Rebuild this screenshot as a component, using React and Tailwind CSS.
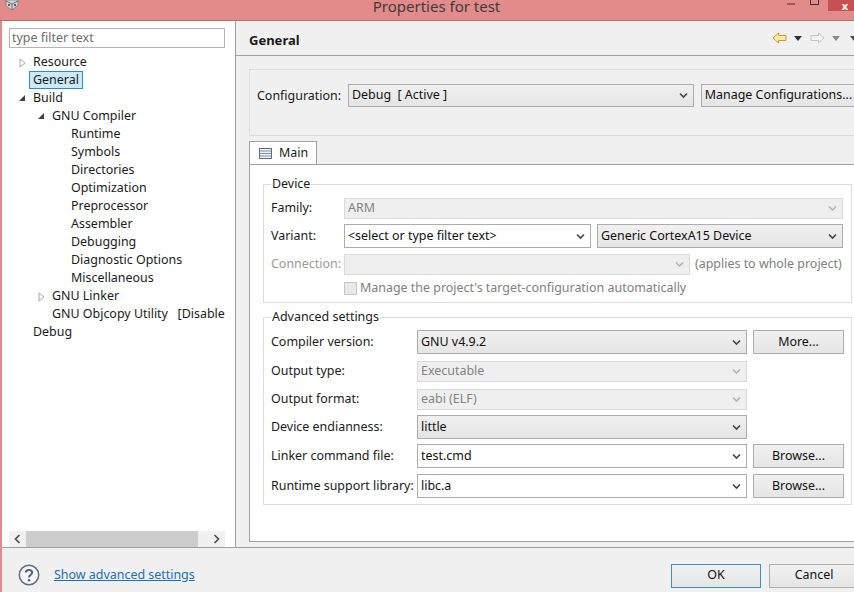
import React from "react";

const tree = [
  { label: "Resource", depth: 0, arrow: "closed" },
  { label: "General", depth: 0, selected: true },
  { label: "Build", depth: 0, arrow: "open" },
  { label: "GNU Compiler", depth: 1, arrow: "open" },
  { label: "Runtime", depth: 2 },
  { label: "Symbols", depth: 2 },
  { label: "Directories", depth: 2 },
  { label: "Optimization", depth: 2 },
  { label: "Preprocessor", depth: 2 },
  { label: "Assembler", depth: 2 },
  { label: "Debugging", depth: 2 },
  { label: "Diagnostic Options", depth: 2 },
  { label: "Miscellaneous", depth: 2 },
  { label: "GNU Linker", depth: 1, arrow: "closed" },
  { label: "GNU Objcopy Utility   [Disabled]", depth: 1 },
  { label: "Debug", depth: 0 },
];

const depthPad = ["pl-[31px]", "pl-[50px]", "pl-[69px]"];
const arrowPad = ["left-[16px]", "left-[35px]"];
const closedPad = ["left-[17px]", "left-[36px]"];

const Chevron = ({ muted }) => (
  <svg width="9" height="7" viewBox="0 0 9 7" className="shrink-0">
    <path d="M1 1.5 L4.5 5 L8 1.5" fill="none" stroke={muted ? "#b4b4b4" : "#444"} strokeWidth="1.6" />
  </svg>
);

const TreeRow = ({ item }) => (
  <div className={`relative flex h-[18px] items-center whitespace-pre ${depthPad[item.depth]}`}>
    {item.arrow === "closed" && (
      <svg width="7" height="10" viewBox="0 0 7 10" className={`absolute top-[5px] ${closedPad[item.depth]}`}>
        <path d="M1 1 L6 5 L1 9 Z" fill="#fff" stroke="#a6a6a6" />
      </svg>
    )}
    {item.arrow === "open" && (
      <svg width="8" height="8" viewBox="0 0 8 8" className={`absolute top-[5px] ${arrowPad[item.depth]}`}>
        <path d="M7 1 L7 7 L1 7 Z" fill="#404040" />
      </svg>
    )}
    <span className={item.selected ? "-ml-[4px] border border-[#2e8db3] bg-[#cde8f7] px-[3px] leading-[16px]" : ""}>
      {item.label}
    </span>
  </div>
);

// variant: gray (readonly combo), white (editable), off (disabled)
const Select = ({ value = "", variant = "gray", className = "" }) => {
  const styles = {
    gray: "border-[#acacac] bg-gradient-to-b from-[#f0f0f0] to-[#e5e5e5] text-[#111]",
    white: "border-[#acacac] bg-white text-[#111]",
    off: "border-[#d9d9d9] bg-[#efefef] text-[#838383]",
  };
  return (
    <div className={`flex items-center justify-between border pl-[3px] pr-[5px] ${styles[variant]} ${className}`}>
      <span className="whitespace-pre">{value}</span>
      <Chevron muted={variant === "off"} />
    </div>
  );
};

const Button = ({ children, className = "" }) => (
  <div className={`flex items-center justify-center border border-[#acacac] bg-gradient-to-b from-[#f0f0f0] to-[#e5e5e5] text-[#111] ${className}`}>
    {children}
  </div>
);

const Row = ({ label, children, className = "", labelClass = "" }) => (
  <div className={`flex items-center ${className}`}>
    <span className={`shrink-0 whitespace-nowrap ${labelClass}`}>{label}</span>
    {children}
  </div>
);

const App = () => {
  return (
    <div
      className="flex h-[592px] w-[854px] flex-col overflow-hidden bg-[#e38a8a] text-[12.45px] text-[#1a1a1a]"
      style={{ fontFamily: '"Noto Sans", sans-serif' }}
    >
      {/* Title bar */}
      <div className="flex h-[21px] shrink-0 items-start border-b border-[#b56f6f]">
        <svg width="24" height="11" viewBox="0 0 24 11" className="shrink-0">
          <path d="M6 0 L18 0 L18 5 L12 10 L6 6 Z" fill="#d6d6d6" stroke="#777" strokeWidth="0.7" />
          <path d="M12 4 L12 10 M6 1 L12 4 L18 1" fill="none" stroke="#555" strokeWidth="0.8" />
          <circle cx="9" cy="5" r="1" fill="#333" />
          <circle cx="15" cy="5" r="1" fill="#333" />
        </svg>
        <div className="-mt-[5px] flex-1 pl-[62px] text-center text-[15px] leading-[22px] text-[#3d3d3d]">
          Properties for test
        </div>
        <div className="flex w-[67px] shrink-0 items-start">
          <div className="mt-[3px] h-[2px] w-[8px] bg-[#a05a5a]" />
          <div className="ml-[15px] h-[5px] w-[9px] border-x border-b border-[#333]" />
          <div className="ml-[9px] flex h-[11px] flex-1 items-center justify-center bg-[#c75050] pl-[8px] text-[11px] font-bold leading-none text-white">
            x
          </div>
        </div>
      </div>

      {/* Body */}
      <div className="ml-[2px] flex min-h-0 flex-1 flex-col bg-[#f0f0f0]">
        <div className="flex min-h-0 flex-1">
          {/* Left tree */}
          <div className="flex w-[234px] shrink-0 flex-col border-r border-[#a0a0a0] bg-white pl-[7px]">
            <div className="mt-[7px] flex h-[20px] w-[216px] items-center border border-[#b4b4b4] pl-[2px] text-[#6d6d6d]">
              type filter text
            </div>
            <div className="mt-[5px] w-[216px] flex-1 overflow-hidden">
              <div className="-ml-[7px]">
                {tree.map((item) => (
                  <TreeRow key={item.label} item={item} />
                ))}
              </div>
            </div>
            <div className="flex h-[16px] w-[216px] items-center bg-[#f0f0f0]">
              <div className="flex w-[17px] justify-center">
                <svg width="7" height="10" viewBox="0 0 7 10">
                  <path d="M5.5 1 L1.5 5 L5.5 9" fill="none" stroke="#505050" strokeWidth="1.7" />
                </svg>
              </div>
              <div className="h-full w-[172px] bg-[#cdcdcd]" />
              <div className="flex flex-1 justify-end pr-[5px]">
                <svg width="7" height="10" viewBox="0 0 7 10">
                  <path d="M1.5 1 L5.5 5 L1.5 9" fill="none" stroke="#505050" strokeWidth="1.7" />
                </svg>
              </div>
            </div>
          </div>

          {/* Right pane */}
          <div className="flex min-w-0 flex-1 flex-col">
            <div className="flex h-[35px] shrink-0 items-center justify-between border-b border-[#a0a0a0] pl-[13px]">
              <span className="mt-[6px] text-[13px] font-bold">General</span>
              <div className="flex items-center">
                <svg width="15" height="12" viewBox="0 0 15 12">
                  <path d="M1 6 L6.5 1 L6.5 3.5 L14 3.5 L14 8.5 L6.5 8.5 L6.5 11 Z" fill="#ffe9a0" stroke="#d09a30" />
                </svg>
                <svg width="8" height="5" viewBox="0 0 8 5" className="ml-[7px]">
                  <path d="M0 0 L8 0 L4 5 Z" fill="#333" />
                </svg>
                <svg width="15" height="12" viewBox="0 0 15 12" className="ml-[8px]">
                  <path d="M14 6 L8.5 1 L8.5 3.5 L1 3.5 L1 8.5 L8.5 8.5 L8.5 11 Z" fill="#f2f2f2" stroke="#c4c4c4" />
                </svg>
                <svg width="8" height="5" viewBox="0 0 8 5" className="ml-[7px]">
                  <path d="M0 0 L8 0 L4 5 Z" fill="#8a8a8a" />
                </svg>
                <svg width="8" height="5" viewBox="0 0 8 5" className="-mr-[4px] ml-[10px]">
                  <path d="M0 0 L8 0 L4 5 Z" fill="#44446a" />
                </svg>
              </div>
            </div>

            <div className="flex min-h-0 flex-1 flex-col pl-[13px] pt-[13px]">
              {/* Configuration */}
              <div className="h-[67px] w-[620px] shrink-0 border border-[#dcdcdc] pl-[7px] pt-[14px]">
                <Row label="Configuration:" labelClass="mt-[1px] w-[91px]" className="h-[23px]">
                  <Select value="Debug  [ Active ]" className="h-full w-[346px]" />
                  <Button className="ml-[7px] h-full w-[155px] whitespace-nowrap">Manage Configurations...</Button>
                </Row>
              </div>

              {/* Tab */}
              <div className="mt-[5px] flex h-[24px] w-[68px] shrink-0 items-center border-x border-t border-[#a0a0a0] bg-white pl-[9px]">
                <svg width="13" height="11" viewBox="0 0 13 11">
                  <rect x="0.5" y="0.5" width="12" height="10" fill="#eef2f6" stroke="#56708c" />
                  <path d="M1 3 H12 M1 5.5 H12 M1 8 H12" stroke="#7d93aa" />
                </svg>
                <span className="ml-[7px]">Main</span>
              </div>

              {/* Tab body */}
              <div className="-mt-px min-h-0 flex-1 border-l border-t border-[#a0a0a0] bg-white pl-[13px] pt-[10px]">
                <fieldset className="h-[128px] w-[589px] border border-[#dcdcdc] pl-[7px]">
                  <legend className="px-[1px] leading-[18px]">Device</legend>
                  <Row label="Family:" labelClass="w-[73px]" className="mt-[5px] h-[21px]">
                    <Select value="ARM" variant="off" className="h-full w-[499px]" />
                  </Row>
                  <Row label="Variant:" labelClass="w-[73px]" className="mt-[5px] h-[24px]">
                    <Select value="<select or type filter text>" variant="white" className="h-full w-[247px]" />
                    <Select value="Generic CortexA15 Device" className="ml-[6px] h-full w-[246px]" />
                  </Row>
                  <Row label="Connection:" labelClass="w-[73px] text-[#9a9a9a]" className="mt-[6px] h-[21px]">
                    <Select variant="off" className="h-full w-[346px]" />
                    <span className="ml-[5px] whitespace-nowrap text-[#808080]">(applies to whole project)</span>
                  </Row>
                  <div className="ml-[73px] mt-[4px] flex items-center text-[#808080]">
                    <div className="h-[13px] w-[13px] shrink-0 border border-[#c4c4c4] bg-[#e8e8e8]" />
                    <span className="ml-[3px] whitespace-nowrap">Manage the project's target-configuration automatically</span>
                  </div>
                </fieldset>

                <fieldset className="mt-[5px] h-[197px] w-[589px] border border-[#dcdcdc] pl-[7px]">
                  <legend className="px-[1px] leading-[18px]">Advanced settings</legend>
                  <Row label="Compiler version:" labelClass="w-[146px]" className="mt-[4px] h-[24px]">
                    <Select value="GNU v4.9.2" className="h-full w-[330px]" />
                    <Button className="ml-[6px] h-full w-[91px]">More...</Button>
                  </Row>
                  <Row label="Output type:" labelClass="w-[146px]" className="mt-[7px] h-[21px]">
                    <Select value="Executable" variant="off" className="h-full w-[330px]" />
                  </Row>
                  <Row label="Output format:" labelClass="w-[146px]" className="mt-[7px] h-[21px]">
                    <Select value="eabi (ELF)" variant="off" className="h-full w-[330px]" />
                  </Row>
                  <Row label="Device endianness:" labelClass="w-[146px]" className="mt-[5px] h-[24px]">
                    <Select value="little" className="h-full w-[330px]" />
                  </Row>
                  <Row label="Linker command file:" labelClass="w-[146px]" className="mt-[5px] h-[24px]">
                    <Select value="test.cmd" variant="white" className="h-full w-[330px]" />
                    <Button className="ml-[6px] h-full w-[91px]">Browse...</Button>
                  </Row>
                  <Row label="Runtime support library:" labelClass="w-[146px]" className="mt-[6px] h-[24px]">
                    <Select value="libc.a" variant="white" className="h-full w-[330px]" />
                    <Button className="ml-[6px] h-full w-[91px]">Browse...</Button>
                  </Row>
                </fieldset>
              </div>
              <div className="h-[6px] shrink-0 border-t border-[#a0a0a0]" />
            </div>
          </div>
        </div>

        {/* Footer */}
        <div className="flex h-[45px] shrink-0 items-center border-t border-[#a0a0a0] pl-[16px] pt-[11px]">
          <svg width="22" height="22" viewBox="0 0 22 22" className="-mt-[2px] shrink-0">
            <circle cx="11" cy="11" r="9.7" fill="#f6f7f9" stroke="#5e6f88" strokeWidth="1.5" />
            <path d="M7.8 8.6 C7.8 5 14.2 5 14.2 8.6 C14.2 11 11 10.8 11 13.4" fill="none" stroke="#54647c" strokeWidth="2" />
            <circle cx="11" cy="16.2" r="1.3" fill="#54647c" />
          </svg>
          <span className="ml-[14px] w-[140px] shrink-0 whitespace-nowrap text-[#1a6fb5] underline">Show advanced settings</span>
          <Button className="ml-[477px] h-[24px] w-[90px] shrink-0 !border-[#3c8fc4]">OK</Button>
          <Button className="ml-[8px] h-[24px] w-[90px] shrink-0">Cancel</Button>
        </div>
      </div>
    </div>
  );
};

export default App;
